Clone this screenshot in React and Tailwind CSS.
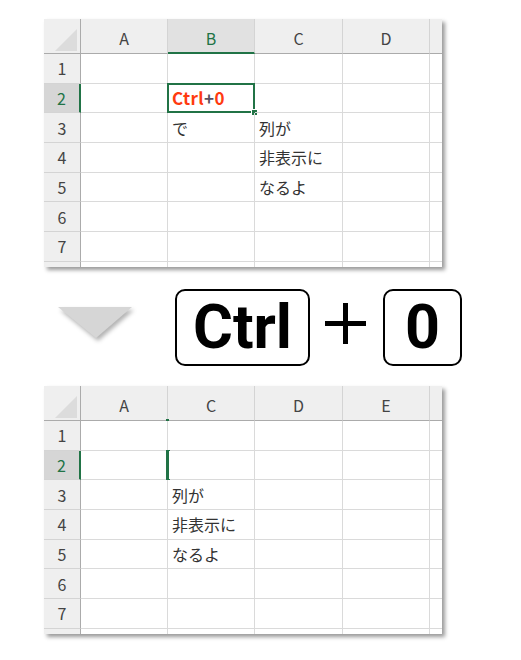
import React from 'react';

const Corner = () => (
  <div className="bg-[#efefef] border-r border-b border-r-[#ababab] border-b-[#ababab] flex items-end justify-end pr-[3px] pb-[2px]">
    <svg width="22" height="22" viewBox="0 0 22 22">
      <polygon points="22,0 22,22 0,22" fill="#dcdcdc" />
    </svg>
  </div>
);

const Sheet = ({ cols, selCol, cells, hiddenSel }) => {
  const rows = [1, 2, 3, 4, 5, 6, 7];
  return (
    <div className="relative w-[398px] h-[248px] bg-white overflow-hidden shadow-[3px_3px_4px_rgba(0,0,0,0.4)] grid grid-cols-[37px_87px_87px_88px_87px_12px] grid-rows-[35px_repeat(7,29.7px)_5px] font-['Noto_Sans_CJK_JP',sans-serif]">
      {/* header row */}
      <Corner />
      {cols.map((c, i) => (
        <div
          key={c}
          className={
            i === selCol
              ? 'bg-[#e1e1e1] border-r border-r-[#d4d4d4] border-b-2 border-b-[#217346] flex items-center justify-center pt-[4px] text-[16px] text-[#217346]'
              : 'relative bg-[#efefef] border-r border-r-[#d4d4d4] border-b border-b-[#ababab] flex items-center justify-center pt-[4px] text-[16px] text-[#444]'
          }
        >
          {c}
          {hiddenSel && i === 1 && (
            <div className="absolute left-[-2px] bottom-[-1px] w-[3px] h-[2px] bg-[#217346]"></div>
          )}
        </div>
      ))}
      <div className="bg-[#efefef] border-b border-b-[#ababab]"></div>

      {rows.map((r) => (
        <React.Fragment key={r}>
          <div
            className={
              r === 2
                ? 'bg-[#d6d6d6] border-r-2 border-r-[#217346] border-b border-b-[#d4d4d4] flex items-center justify-center text-[16px] text-[#217346]'
                : 'bg-[#efefef] border-r border-r-[#ababab] border-b border-b-[#d4d4d4] flex items-center justify-center text-[16px] text-[#444]'
            }
          >
            {r}
          </div>
          {cols.map((c, i) => {
            const val = cells[`${i}-${r}`];
            const isSel = !hiddenSel && i === selCol && r === 2;
            return (
              <div
                key={c}
                className="relative border-r border-b border-[#dadada] flex items-center pl-[4px] text-[16px] text-[#333] whitespace-nowrap"
              >
                {val === 'Ctrl+0' ? (
                  <span className="font-bold text-[17px] text-[#ff3a0f] tracking-[0.4px]">
                    Ctrl<span className="text-[#5a5060]">+</span>0
                  </span>
                ) : (
                  val
                )}
                {isSel && (
                  <>
                    <div className="absolute left-[-1px] top-[-1px] right-[-1px] bottom-[-1px] border-2 border-[#217346]"></div>
                    <div className="absolute right-[-4px] bottom-[-4px] w-[7px] h-[7px] bg-[#217346] border border-white"></div>
                  </>
                )}
                {hiddenSel && i === 1 && r === 2 && (
                  <>
                    <div className="absolute left-[-2px] top-[-1px] bottom-[-1px] w-[3px] bg-[#217346]"></div>
                    <div className="absolute left-[-2px] top-[-1px] w-[4px] h-[1px] bg-[#217346]"></div>
                    <div className="absolute left-[-2px] bottom-[-1px] w-[4px] h-[1px] bg-[#217346]"></div>
                  </>
                )}
              </div>
            );
          })}
          <div className="border-b border-[#dadada]"></div>
        </React.Fragment>
      ))}

      {/* partial last row */}
      <div className="bg-[#efefef] border-r border-r-[#ababab]"></div>
      {cols.map((c) => (
        <div key={c} className="border-r border-[#dadada]"></div>
      ))}
      <div></div>
    </div>
  );
};

const Key = ({ children, w }) => (
  <div
    className={`${w} h-[77px] border-[2.5px] border-black rounded-[10px] flex items-center justify-center font-['Roboto',sans-serif] font-bold text-[61px] leading-none text-black`}
  >
    {children}
  </div>
);

export default function App() {
  const topCells = {
    '1-2': 'Ctrl+0',
    '1-3': 'で',
    '2-3': '列が',
    '2-4': '非表示に',
    '2-5': 'なるよ',
  };
  const bottomCells = {
    '1-3': '列が',
    '1-4': '非表示に',
    '1-5': 'なるよ',
  };

  return (
    <div className="w-[521px] h-[660px] bg-white pt-[19px] pl-[44px]">
      <Sheet cols={['A', 'B', 'C', 'D']} selCol={1} cells={topCells} />

      {/* shortcut */}
      <div className="h-[119px] flex items-center">
        <svg width="80" height="40" viewBox="0 0 80 40" className="ml-[12px] mt-[-4px] drop-shadow-[2px_3px_2px_rgba(0,0,0,0.3)]">
          <polygon points="2,2 76,2 40,33" fill="#d6d6d6" />
        </svg>
        <div className="ml-[39px] mt-[1px]">
          <Key w="w-[135px]">Ctrl</Key>
        </div>
        <svg width="41" height="41" viewBox="0 0 41 41" className="ml-[15px] mt-[-6px]">
          <rect x="18" y="0" width="5" height="41" fill="#000" />
          <rect x="0" y="18" width="41" height="5" fill="#000" />
        </svg>
        <div className="ml-[17px] mt-[1px]">
          <Key w="w-[79px]">0</Key>
        </div>
      </div>

      <Sheet cols={['A', 'C', 'D', 'E']} selCol={-1} cells={bottomCells} hiddenSel />
    </div>
  );
}
